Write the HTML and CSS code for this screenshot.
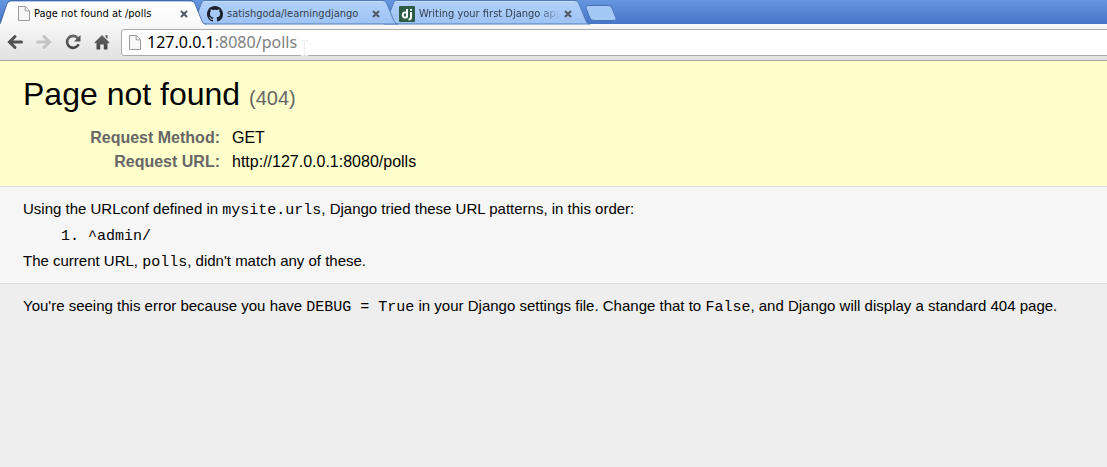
FILE: index.html
```html
<!DOCTYPE html>
<html lang="en">
<head>
<meta charset="utf-8">
<title>Page not found at /polls</title>
<link rel="stylesheet" href="styles.css">
</head>
<body>
<svg class="defs" width="0" height="0" aria-hidden="true">
  <defs>
    <linearGradient id="tab-blue" x1="0" y1="0" x2="0" y2="1"><stop offset="0" stop-color="#b1d1fa"/><stop offset="1" stop-color="#9dc3f4"/></linearGradient>
    <linearGradient id="tab-white" x1="0" y1="0" x2="0" y2="1"><stop offset="0" stop-color="#ffffff"/><stop offset="1" stop-color="#f8f8f8"/></linearGradient>
    <linearGradient id="dark" x1="0" y1="0" x2="0" y2="1"><stop offset="0" stop-color="#666"/><stop offset="1" stop-color="#444"/></linearGradient>
    <symbol id="page" viewBox="0 0 12 15"><path d="M.5.5h6.8l4.2 4.2v9.8H.5z" fill="#f7f7f7" stroke="#999"/><path d="M7.2.8v4h4" fill="#fff" stroke="#999"/></symbol>
    <symbol id="close" viewBox="0 0 8 8"><path d="M1 1l6 6M7 1L1 7" stroke="#505864" stroke-width="2" fill="none"/></symbol>
  </defs>
</svg>
<header class="browser">
  <nav class="tabs" aria-label="Tabs">
    <div class="tab active">
      <svg class="shape" viewBox="0 0 206 25" aria-hidden="true"><path d="M-1 25L1 22L7 4Q8 1.500 11 1.500H191Q194 1.500 195 4L202 22L206 25z" fill="url(#tab-white)"/><path d="M0 24L7 4Q8 .5 11 .5H191Q194 .5 195 4L202 21Q203 24 206 24.500" fill="none" stroke="#35588f" stroke-opacity=".7"/></svg>
      <svg class="page-icon" aria-hidden="true"><use href="#page"/></svg>
      <span class="title">Page not found at /polls</span>
      <button class="close" aria-label="Close tab"><svg aria-hidden="true"><use href="#close"/></svg></button>
    </div>
    <div class="tab second">
      <svg class="shape" viewBox="0 0 206 25" aria-hidden="true"><path d="M0 24Q2 24 3 21L9 4Q10 .5 13 .5H191Q194 .5 195 4L202 21Q203 24 206 24z" fill="url(#tab-blue)" stroke="#517eb9"/><path d="M11 2.500Q12 1.500 13 1.500H191" fill="none" stroke="#c6defc"/></svg>
      <svg class="favicon" viewBox="0 0 16 16" aria-hidden="true"><path fill="#1c2029" d="M8 0C3.580 0 0 3.580 0 8c0 3.540 2.290 6.530 5.470 7.590.4.070.55-.17.55-.38 0-.19-.01-.82-.01-1.490-2.010.37-2.530-.49-2.690-.94-.09-.23-.48-.94-.82-1.130-.28-.15-.68-.52-.01-.53.63-.01 1.080.58 1.230.82.72 1.210 1.870.87 2.330.66.070-.52.28-.87.51-1.070-1.780-.2-3.640-.89-3.640-3.950 0-.87.31-1.590.82-2.150-.08-.2-.36-1.020.08-2.120 0 0 .67-.21 2.200.82.64-.18 1.320-.27 2-.27s1.360.09 2 .27c1.530-1.040 2.200-.82 2.200-.82.44 1.100.16 1.920.08 2.120.51.56.82 1.270.82 2.150 0 3.070-1.870 3.750-3.650 3.950.29.25.54.73.54 1.480 0 1.070-.01 1.930-.01 2.200 0 .21.15.46.55.38A8.010 8.010 0 0 0 16 8c0-4.420-3.580-8-8-8z"/></svg>
      <span class="title">satishgoda/learningdjango</span>
      <button class="close" aria-label="Close tab"><svg aria-hidden="true"><use href="#close"/></svg></button>
    </div>
    <div class="tab">
      <svg class="shape" viewBox="0 0 206 25" aria-hidden="true"><path d="M0 24Q2 24 3 21L9 4Q10 .5 13 .5H191Q194 .5 195 4L202 21Q203 24 206 24z" fill="url(#tab-blue)" stroke="#517eb9"/><path d="M11 2.500Q12 1.500 13 1.500H191" fill="none" stroke="#c6defc"/></svg>
      <svg class="favicon" viewBox="0 0 16 16" aria-hidden="true"><rect width="16" height="16" rx="1" fill="#2c5c43"/><path d="M8 3v8.500M8 6.800Q3.800 5.500 3.800 9T8 11.200M12 6v5Q12 13.500 9.500 13.500M12 3v1.700" fill="none" stroke="#fff" stroke-width="2"/></svg>
      <span class="title fade">Writing your first Django app</span>
      <button class="close" aria-label="Close tab"><svg aria-hidden="true"><use href="#close"/></svg></button>
    </div>
    <button class="new-tab" aria-label="New tab"><svg viewBox="0 0 32 16" aria-hidden="true"><path d="M3 .5H23Q26 .5 27 3L31 13Q32 15.500 29 15.500H9Q6 15.500 5 13L1 3Q0 .5 3 .5z" fill="#a4c8f6" stroke="#4874b7"/></svg></button>
  </nav>
  <div class="toolbar">
    <button class="tool" aria-label="Back"><svg viewBox="0 0 16 16" aria-hidden="true"><path d="M8 2.500L2.500 8L8 13.500M3 8H14.500" fill="none" stroke="#505050" stroke-width="3" stroke-linecap="round"/></svg></button>
    <button class="tool" aria-label="Forward"><svg viewBox="0 0 16 16" aria-hidden="true"><path d="M8 2.500L13.500 8L8 13.500M13 8H1.500" fill="none" stroke="#c4c4c4" stroke-width="3" stroke-linecap="round"/></svg></button>
    <button class="tool" aria-label="Reload"><svg viewBox="0 0 16 16" aria-hidden="true"><path d="M12.800 4.200A6 6 0 1 0 13.600 10.200" fill="none" stroke="url(#dark)" stroke-width="2.600"/><path d="M15.500 1V7.500H9z" fill="#555"/></svg></button>
    <button class="tool" aria-label="Home"><svg viewBox="0 0 16 16" aria-hidden="true"><path d="M8 1L15.500 8.500L14.500 9.500L13.500 8.800V15.500H9.800V10.500H6.200V15.500H2.500V8.800L1.500 9.500L.5 8.500zM11.500 1h2v4l-2-2z" fill="url(#dark)"/></svg></button>
    <div class="address">
      <svg class="page-icon" aria-hidden="true"><use href="#page"/></svg>
      <span class="url" role="textbox" aria-label="Address" contenteditable="true" spellcheck="false"><span class="host">127.0.0.1</span>:8080/polls</span>
      <svg class="caret" viewBox="0 0 7 16" aria-hidden="true"><path d="M0 .5H3L3.500 1L4 .5H7M3.500 1V15M0 15.500H3L3.500 15L4 15.500H7" fill="none" stroke="#eeeeee"/></svg>
    </div>
  </div>
</header>
<main>
  <section class="summary">
    <h1>Page not found <span>(404)</span></h1>
    <table class="meta">
      <tr><th scope="row">Request Method:</th><td>GET</td></tr>
      <tr><th scope="row">Request URL:</th><td>http://127.0.0.1:8080/polls</td></tr>
    </table>
  </section>
  <section class="info">
    <p>Using the URLconf defined in <code>mysite.urls</code>, Django tried these URL patterns, in this order:</p>
    <ol><li>^admin/</li></ol>
    <p>The current URL, <code>polls</code>, didn't match any of these.</p>
  </section>
  <section class="explanation">
    <p>You're seeing this error because you have <code>DEBUG = True</code> in your Django settings file. Change that to <code>False</code>, and Django will display a standard 404 page.</p>
  </section>
</main>
</body>
</html>
```
FILE: styles.css
```css
* { box-sizing: border-box; margin: 0; padding: 0; }
body {
  background: #eeeeee;
  color: #000;
  font: 16px/24px "Liberation Sans", Arial, sans-serif;
  overflow-x: hidden;
}
button { border: 0; background: none; display: flex; align-items: center; justify-content: center; }
.defs { position: absolute; }

.tabs {
  display: flex;
  height: 24px;
  background: linear-gradient(#6796e0, #4674c8);
}
.tab {
  position: relative;
  isolation: isolate;
  flex: none;
  display: flex;
  align-items: center;
  width: 206px;
  height: 25px;
  padding: 2px 18px 0 15px;
  color: #333f50;
  font: 11px/16px "DejaVu Sans Condensed", Tahoma, sans-serif;
}
.tab + .tab { margin-left: -14px; }
.active { z-index: 3; padding-left: 18px; color: #000; }
.second { z-index: 2; }
.shape { position: absolute; inset: 0; width: 100%; height: 25px; z-index: -1; }
.page-icon { flex: none; width: 12px; height: 15px; }
.favicon { flex: none; width: 16px; height: 16px; }
.title { flex: 1; min-width: 0; margin: 0 4px; overflow: hidden; white-space: nowrap; }
.fade { -webkit-mask-image: linear-gradient(90deg, #000 85%, transparent); mask-image: linear-gradient(90deg, #000 85%, transparent); }
.close, .close svg { flex: none; width: 8px; height: 8px; }
.new-tab { flex: none; align-self: center; margin: 2px 0 0 -5px; }
.new-tab svg { width: 32px; height: 16px; }

.toolbar {
  display: flex;
  align-items: center;
  gap: 13px;
  height: 37px;
  padding-left: 7px;
  background: linear-gradient(#f8f8f8, #e0e0e0);
  border-bottom: 1px solid #a9a9a9;
}
.tool, .tool svg { flex: none; width: 16px; height: 16px; }
.address {
  position: relative;
  flex: 1;
  display: flex;
  align-items: center;
  gap: 6px;
  height: 27px;
  margin: 0 -4px 0 -2px;
  padding-left: 7px;
  background: #fff;
  border: 1px solid #aaa;
  border-radius: 3px;
}
.url { color: #808080; font: 16px/24px "Noto Sans", Tahoma, sans-serif; outline: 0; }
.host { color: #000; }
.caret { position: absolute; left: 179px; top: 10px; width: 7px; height: 16px; }

section { padding: 10px 23px; border-bottom: 1px solid #dddddd; }
.summary { background: #ffffcc; padding: 13px 23px 12px; }
h1 { font-weight: normal; font-size: 32px; line-height: 40px; margin-bottom: 12px; }
h1 span { color: #666; font-size: 20px; line-height: 24px; }
.meta { border-collapse: collapse; }
.meta th { width: 197px; color: #666; text-align: right; }
.meta td { padding-left: 12px; }
p { font-size: 15px; }
.info { background: #f6f6f6; }
code, ol { font-family: "Liberation Mono", "Courier New", monospace; font-size: 15px; }
code { line-height: 16px; }
ol { padding: 4px 0 0 65px; }
.explanation { border: 0; }
```
